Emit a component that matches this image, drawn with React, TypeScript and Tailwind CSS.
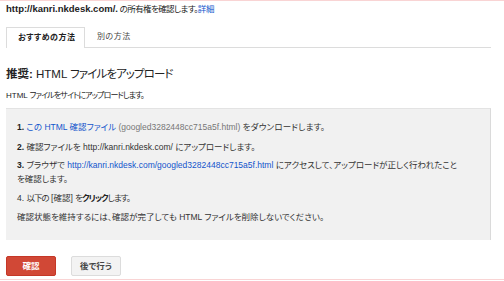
import React from "react";

const font = {
  fontFamily: '"Liberation Sans", Arial, "Noto Sans CJK JP", sans-serif',
};

export default function App() {
  return (
    <div
      className="w-[504px] h-[281px] bg-white overflow-hidden flex flex-col text-[#222] [font-feature-settings:'palt']"
      style={font}
    >
      <div className="h-px bg-[#f9d4d4]" />
      <div className="px-[6px] flex flex-col flex-1">
        <div className="text-[9.5px] leading-[12px] mt-[2px] whitespace-nowrap">
          <span className="font-bold">http://kanri.nkdesk.com/.</span>
          <span className="text-[8.5px] tracking-[-0.6px]"> の所有権を確認します。</span>
          <span className="text-[8.5px] tracking-[-0.3px] text-[#1155cc]">詳細</span>
        </div>
        <div className="mt-[12px] flex items-end border-b border-[#dcdcdc] mr-[7px]">
          <div className="h-[21px] w-[79px] pl-[11px] border border-b-0 border-[#dcdcdc] bg-white -mb-px flex items-center text-[8px] font-bold text-[#222] tracking-[0.5px]">
            おすすめの方法
          </div>
          <div className="h-[20px] pl-[12px] flex items-center text-[8px] text-[#444] tracking-[0.5px]">別の方法</div>
        </div>
        <div className="mt-[19px] text-[11.5px] leading-[14px] text-[#222] whitespace-nowrap">
          <span className="font-bold">推奨:</span> HTML <span className="tracking-[-0.9px]">ファイルをアップロード</span>
        </div>
        <div className="mt-[9px] text-[8px] leading-[12px] text-[#222] whitespace-nowrap">
          HTML <span className="tracking-[-0.9px]">ファイルをサイトにアップロードします。</span>
        </div>
        <div className="mt-[6px] mr-[7px] bg-[#f1f1f1] border-t border-[#e3e3e3] border-r border-r-[#dadada] pl-[11px] pr-[10px] pt-[11px] pb-[16px] text-[8.5px] leading-[14px] text-[#333] flex flex-col">
          <div>
            <span className="font-bold text-[#222]">1.</span>{" "}
            <span className="text-[#1155cc]">この HTML 確認ファイル</span>{" "}
            <span className="text-[#777]">(googled3282448cc715a5f.html)</span>{" "}
            <span className="tracking-[0.2px]">をダウンロードします。</span>
          </div>
          <div className="mt-[6px]">
            <span className="font-bold text-[#222]">2.</span> 確認ファイルを http://kanri.nkdesk.com/ にアップロードします。
          </div>
          <div className="mt-[4px] whitespace-nowrap">
            <span className="font-bold text-[#222]">3.</span> ブラウザで{" "}
            <span className="text-[#1155cc]">http://kanri.nkdesk.com/googled3282448cc715a5f.html</span>{" "}
            にアクセスして、アップロードが正しく行われたこと
            <br />
            を確認します。
          </div>
          <div className="mt-[5px]">
            4. <span className="tracking-[-1px]">以下の</span> [確認]{" "}
            <span className="tracking-[-1px]">を</span>
            <span className="font-bold text-[#222] tracking-[-1px]">クリック</span>
            <span className="tracking-[-1px]">します。</span>
          </div>
          <div className="mt-[5px]">確認状態を維持するには、確認が完了しても HTML ファイルを削除しないでください。</div>
        </div>
        <div className="mt-[16px] flex gap-[15px]">
          <div className="w-[50px] h-[20px] rounded-[2px] bg-[#d14836] border border-[#c53727] text-white text-[8.5px] font-bold flex items-center justify-center">
            確認
          </div>
          <div className="w-[50px] h-[20px] rounded-[2px] bg-[#f3f3f3] border border-[#dcdcdc] text-[#444] text-[8.5px] font-bold flex items-center justify-center">
            後で行う
          </div>
        </div>
      </div>
      <div className="h-px bg-[#f9d4d4] mb-[1px]" />
    </div>
  );
}
